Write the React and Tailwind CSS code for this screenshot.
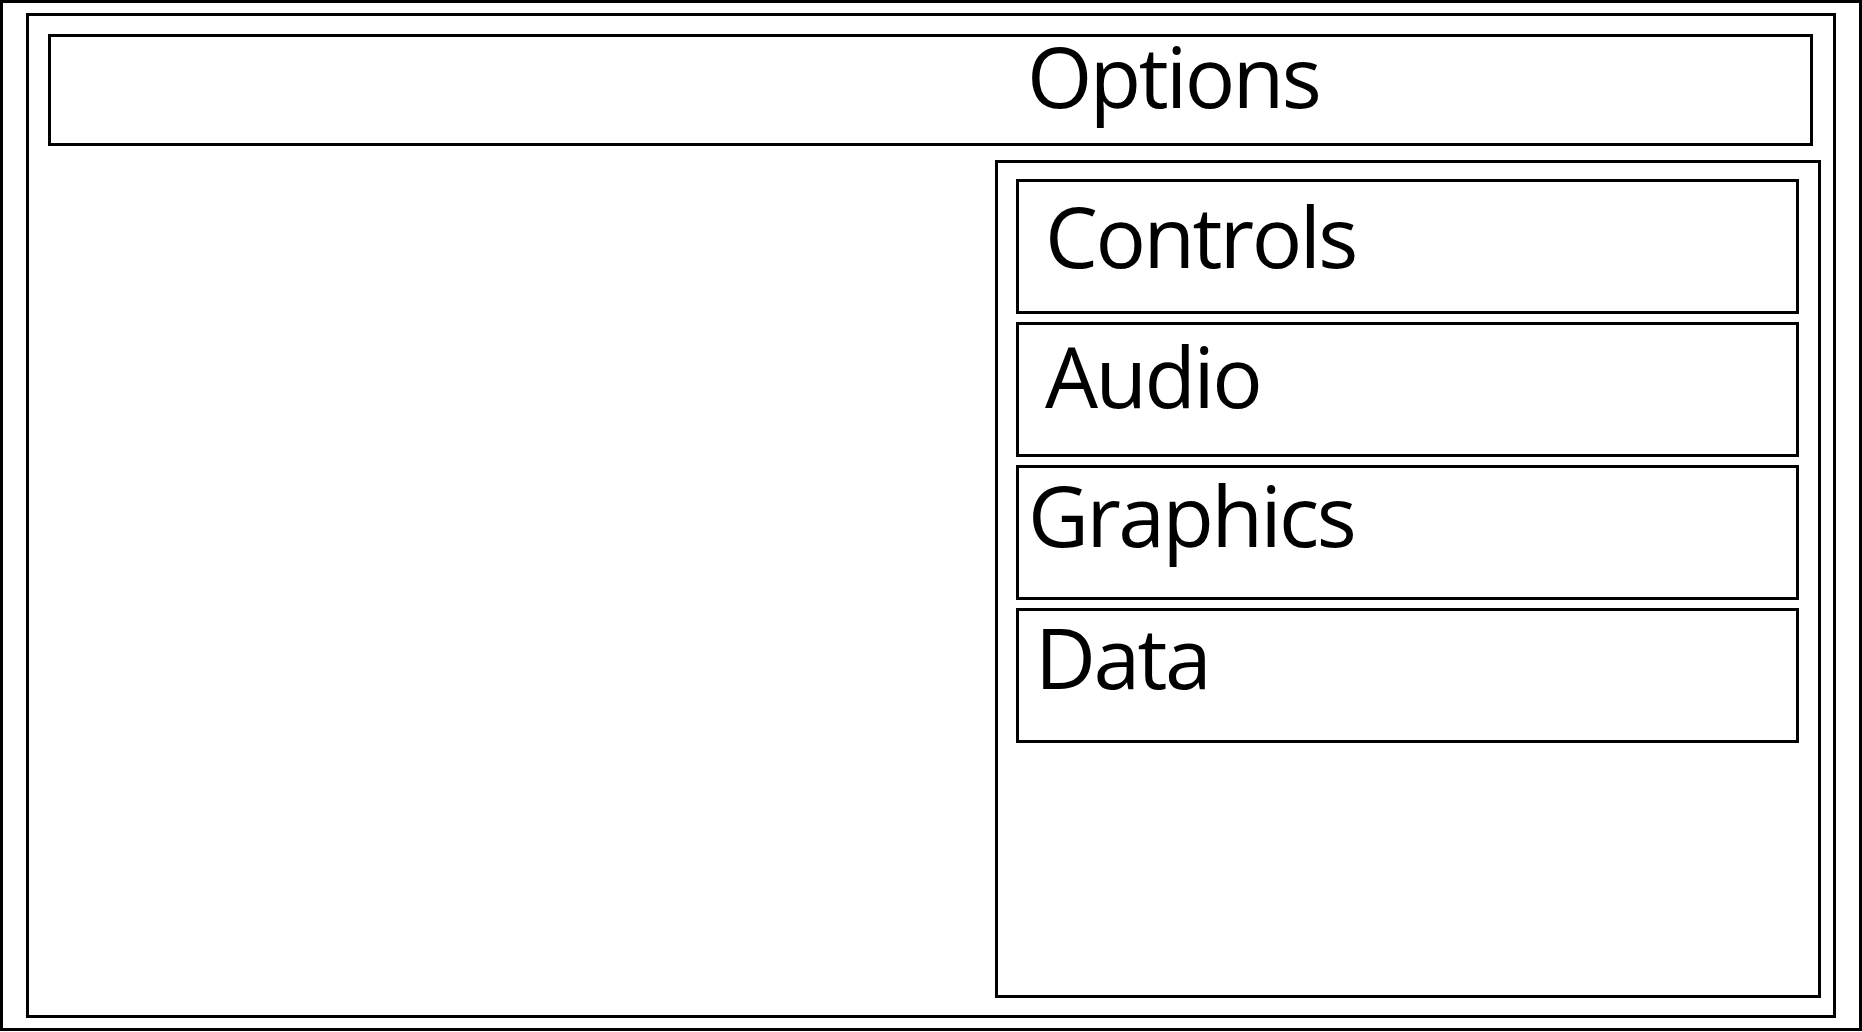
import React from "react";

const sections = [
  { label: "Controls", pad: "pl-[26px] pt-[12px]" },
  { label: "Audio", pad: "pl-[26px] pt-[9px]" },
  { label: "Graphics", pad: "pl-[9px] pt-[5px]" },
  { label: "Data", pad: "pl-[16px] pt-[4px]" },
];

const Options = () => {
  return (
    <div
      className="w-full h-[1031px] bg-white text-black border-[3px] border-black px-[23px] py-[10px]"
      style={{ fontFamily: '"Open Sans", "Noto Sans", sans-serif' }}
    >
      <div className="h-full border-[3px] border-black flex flex-col pl-[19px] pr-[12px] pt-[18px] pb-[17px]">
        <div className="h-[112px] mr-[8px] border-[3px] border-black pl-[976px]">
          <h1 className="text-[84px] leading-[77px] tracking-[-0.03em] font-normal">
            Options
          </h1>
        </div>

        <div className="flex-1 flex justify-end mt-[14px]">
          <div className="w-[826px] h-full border-[3px] border-black pl-[18px] pr-[19px] pt-[16px] flex flex-col gap-[8px]">
            {sections.map((s) => (
              <div
                key={s.label}
                className={`h-[135px] border-[3px] border-black ${s.pad}`}
              >
                <span className="block text-[84px] leading-none tracking-[-0.03em]">
                  {s.label}
                </span>
              </div>
            ))}
          </div>
        </div>
      </div>
    </div>
  );
};

export default function App() {
  return <Options />;
}
